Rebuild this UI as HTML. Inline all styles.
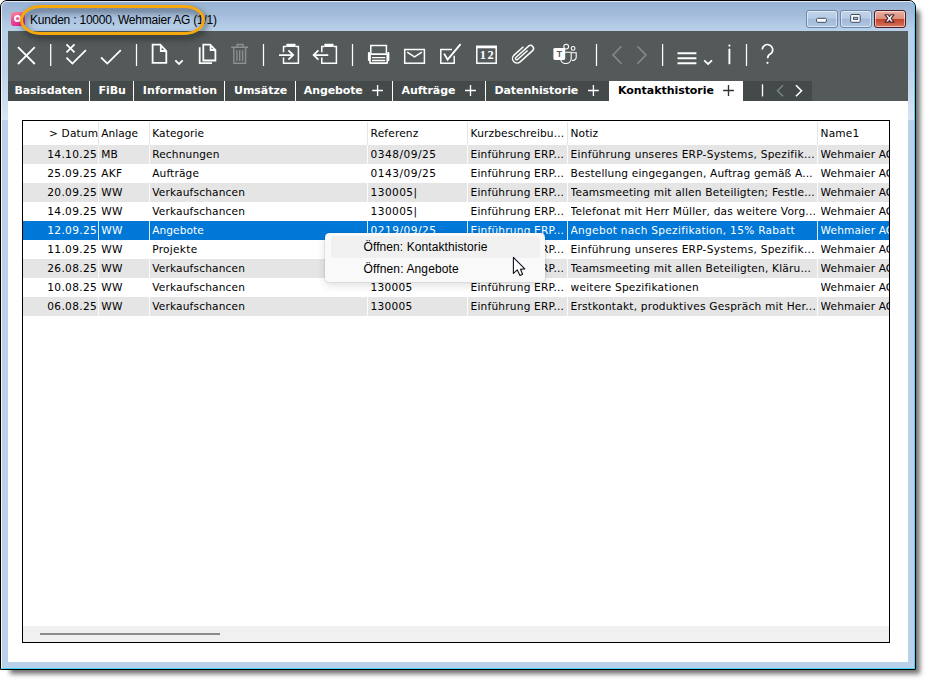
<!DOCTYPE html>
<html lang="de">
<head>
<meta charset="utf-8">
<title>Kunden : 10000, Wehmaier AG (1/1)</title>
<style>
html,body{margin:0;padding:0;background:#fff;}
body{width:931px;height:685px;position:relative;overflow:hidden;font-family:"DejaVu Sans","Liberation Sans",sans-serif;}
#win{position:absolute;left:0;top:0;width:914px;height:668px;border:1px solid #000;border-radius:7px 7px 0 0;
 background:linear-gradient(#97b2d4 0,#a2bbd9 12px,#b6cde7 26px,#b9d1ea 31px,#bcd3eb 70px,#d7e5f3 119px,#b9d1ea 119px,#b9d1ea 100%);box-shadow:7px 7px 5px -3px rgba(0,0,0,.56);}

#inner{position:absolute;left:0;top:0;width:912px;height:666px;border:1px solid rgba(255,255,255,.75);border-right-color:#45d5f8;border-bottom-color:#45d5f8;border-radius:6px 6px 0 0;}
#title{position:absolute;left:30px;top:13px;font-family:"Liberation Sans",sans-serif;font-size:12px;line-height:14px;color:#000;white-space:nowrap;}
#appicon{position:absolute;left:11px;top:12px;width:14px;height:14px;border-radius:3px;background:linear-gradient(160deg,#f98b9c 0,#ee4f93 45%,#e01f9b 100%);}
#appicon i{position:absolute;left:3.1px;top:3.2px;width:3.2px;height:3.2px;border:2.1px solid #fff;border-radius:50%;}
.cb{position:absolute;top:10px;height:16px;width:30px;border:1px solid #6d87a8;border-radius:3px;
 background:linear-gradient(#c3d4e9 0,#b7cbe4 45%,#a2bad9 50%,#b0c6e1 100%);box-shadow:inset 0 0 0 1px rgba(255,255,255,.55);}
#bmin{left:806px}#bmax{left:840px}
#bclose{left:874px;border-color:#521a24;background:linear-gradient(#e7b0a3 0,#dc8f7e 48%,#c4432a 52%,#d4775e 100%);}
#toolbar{position:absolute;left:8px;top:31px;width:900px;height:70px;background:#535a59;}
#tabbar{position:absolute;left:8px;top:81px;width:804px;height:20px;background:#434a49;}
.tab{position:absolute;top:81px;height:20px;line-height:20px;font-weight:bold;font-size:11px;color:#fff;white-space:nowrap;}
.tsep{position:absolute;top:81px;width:1px;height:20px;background:#fff;}
#acttab{position:absolute;left:609px;top:81px;width:134px;height:20px;background:#fff;}
#content{position:absolute;left:8px;top:101px;width:900px;height:561px;background:#fff;}
#grid{position:absolute;left:22px;top:120px;width:866px;height:521px;border:1px solid #000;background:#fff;overflow:hidden;}
.row{position:absolute;left:0;width:866px;height:19px;line-height:18px;font-size:10.6px;color:#000;white-space:nowrap;}
.row.g{background:#e5e5e5;}
.row.sel{background:#0078d7;color:#fff;}
.row.h{height:24px;line-height:24px;}
.c{position:absolute;top:0;height:100%;overflow:hidden;}
.c1{left:0;width:74.2px;text-align:right}
.row.h .c1{width:75.2px}
.c2{left:78.2px;width:48px}
.c3{left:129.2px;width:214px}
.c4{left:347.6px;width:96px}
.c5{left:447.6px;width:97px}
.c6{left:547.6px;width:247px}
.c7{left:797.6px;width:70px}
.vs{position:absolute;top:0;width:1px;height:195px;background:rgba(255,255,255,.85);}
.hs{position:absolute;top:1px;width:1px;height:23px;background:#e6e6e6;}
#strack{position:absolute;left:0;top:505px;width:866px;height:16px;background:#f0f0f0;}
#sthumb{position:absolute;left:17px;top:7px;width:180px;height:2px;background:#8b8b8b;}
#menu{position:absolute;left:325px;top:233px;width:220px;height:49px;background:#f9f9f9;border-radius:4.5px;
 box-shadow:0 0 0 1px rgba(0,0,0,.05),0 3px 8px rgba(0,0,0,.14);font-family:"Liberation Sans",sans-serif;font-size:12px;color:#000;}
#mhov{position:absolute;left:6px;top:3px;width:209px;height:22px;border-radius:3.5px;background:#f0f0f0;}
.mi{position:absolute;left:38.5px;height:22px;line-height:22px;white-space:nowrap;}
#ring{position:absolute;left:19.5px;top:5px;width:179px;height:24px;border:3px solid #f7a80c;border-radius:20px/15px;filter:drop-shadow(2px 3px 3px rgba(0,0,0,.68));}
svg{position:absolute;left:0;top:0;}
</style>
</head>
<body>
<div id="win">

 <div id="inner"></div>
</div>
<div id="appicon"><i></i></div>
<div id="title"><span style="letter-spacing:-0.215px">Kunden : 10000, Wehmaier AG (1/1)</span></div>
<div class="cb" id="bmin"></div><div class="cb" id="bmax"></div><div class="cb" id="bclose"></div>
<div id="toolbar"></div>
<div id="tabbar"></div>
<div id="content"></div>
<div id="acttab"></div>
<div class="tab" style="left:14.4px"><span style="letter-spacing:-0.08px">Basisdaten</span></div>
<div class="tab" style="left:98.6px"><span style="letter-spacing:-0.093px">FiBu</span></div>
<div class="tab" style="left:142.7px"><span style="letter-spacing:0.151px">Information</span></div>
<div class="tab" style="left:234.0px"><span style="letter-spacing:-0.025px">Umsätze</span></div>
<div class="tab" style="left:303.8px"><span style="letter-spacing:-0.115px">Angebote</span></div>
<div class="tab" style="left:401.5px"><span style="letter-spacing:-0.093px">Aufträge</span></div>
<div class="tab" style="left:494.4px"><span style="letter-spacing:-0.068px">Datenhistorie</span></div>
<div class="tab" style="left:618.0px;color:#000"><span style="letter-spacing:-0.049px">Kontakthistorie</span></div>
<div class="tsep" style="left:89px"></div><div class="tsep" style="left:133px"></div><div class="tsep" style="left:224px"></div><div class="tsep" style="left:295px"></div><div class="tsep" style="left:392px"></div><div class="tsep" style="left:485px"></div>

<div id="grid">
 <div class="row h" style="top:0"><div class="c c1"><span style="letter-spacing:0.155px">&gt; Datum</span></div><div class="c c2"><span style="letter-spacing:0.048px">Anlage</span></div><div class="c c3"><span style="letter-spacing:0.126px">Kategorie</span></div><div class="c c4"><span style="letter-spacing:0.16px">Referenz</span></div><div class="c c5"><span style="letter-spacing:0.124px">Kurzbeschreibu...</span></div><div class="c c6"><span style="letter-spacing:0.102px">Notiz</span></div><div class="c c7"><span style="letter-spacing:0.139px">Name1</span></div></div>
<div class="row g" style="top:24px"><div class="c c1"><span style="letter-spacing:0.35px">14.10.25</span></div><div class="c c2"><span style="letter-spacing:0.066px">MB</span></div><div class="c c3"><span style="letter-spacing:0.137px">Rechnungen</span></div><div class="c c4"><span style="letter-spacing:0.492px">0348/09/25</span></div><div class="c c5"><span style="letter-spacing:0.195px">Einführung ERP...</span></div><div class="c c6"><span style="letter-spacing:0.247px">Einführung unseres ERP-Systems, Spezifik...</span></div><div class="c c7"><span style="letter-spacing:0.113px">Wehmaier AG</span></div></div>
<div class="row " style="top:43px"><div class="c c1"><span style="letter-spacing:0.35px">25.09.25</span></div><div class="c c2"><span style="letter-spacing:0.279px">AKF</span></div><div class="c c3"><span style="letter-spacing:0.143px">Aufträge</span></div><div class="c c4"><span style="letter-spacing:0.492px">0143/09/25</span></div><div class="c c5"><span style="letter-spacing:0.195px">Einführung ERP...</span></div><div class="c c6"><span style="letter-spacing:0.165px">Bestellung eingegangen, Auftrag gemäß A...</span></div><div class="c c7"><span style="letter-spacing:0.113px">Wehmaier AG</span></div></div>
<div class="row g" style="top:62px"><div class="c c1"><span style="letter-spacing:0.35px">20.09.25</span></div><div class="c c2"><span style="letter-spacing:0.231px">WW</span></div><div class="c c3"><span style="letter-spacing:0.163px">Verkaufschancen</span></div><div class="c c4"><span style="letter-spacing:0.402px">130005|</span></div><div class="c c5"><span style="letter-spacing:0.195px">Einführung ERP...</span></div><div class="c c6"><span style="letter-spacing:0.179px">Teamsmeeting mit allen Beteiligten; Festle...</span></div><div class="c c7"><span style="letter-spacing:0.113px">Wehmaier AG</span></div></div>
<div class="row " style="top:81px"><div class="c c1"><span style="letter-spacing:0.35px">14.09.25</span></div><div class="c c2"><span style="letter-spacing:0.231px">WW</span></div><div class="c c3"><span style="letter-spacing:0.163px">Verkaufschancen</span></div><div class="c c4"><span style="letter-spacing:0.402px">130005|</span></div><div class="c c5"><span style="letter-spacing:0.195px">Einführung ERP...</span></div><div class="c c6"><span style="letter-spacing:0.185px">Telefonat mit Herr Müller, das weitere Vorg...</span></div><div class="c c7"><span style="letter-spacing:0.113px">Wehmaier AG</span></div></div>
<div class="row sel" style="top:100px"><div class="c c1"><span style="letter-spacing:0.35px">12.09.25</span></div><div class="c c2"><span style="letter-spacing:0.231px">WW</span></div><div class="c c3"><span style="letter-spacing:0.082px">Angebote</span></div><div class="c c4"><span style="letter-spacing:0.492px">0219/09/25</span></div><div class="c c5"><span style="letter-spacing:0.195px">Einführung ERP...</span></div><div class="c c6"><span style="letter-spacing:0.281px">Angebot nach Spezifikation, 15% Rabatt</span></div><div class="c c7"><span style="letter-spacing:0.113px">Wehmaier AG</span></div></div>
<div class="row " style="top:119px"><div class="c c1"><span style="letter-spacing:0.35px">11.09.25</span></div><div class="c c2"><span style="letter-spacing:0.231px">WW</span></div><div class="c c3"><span style="letter-spacing:0.272px">Projekte</span></div><div class="c c4"><span style="letter-spacing:0.255px">130005</span></div><div class="c c5"><span style="letter-spacing:0.195px">Einführung ERP...</span></div><div class="c c6"><span style="letter-spacing:0.247px">Einführung unseres ERP-Systems, Spezifik...</span></div><div class="c c7"><span style="letter-spacing:0.113px">Wehmaier AG</span></div></div>
<div class="row g" style="top:138px"><div class="c c1"><span style="letter-spacing:0.35px">26.08.25</span></div><div class="c c2"><span style="letter-spacing:0.231px">WW</span></div><div class="c c3"><span style="letter-spacing:0.163px">Verkaufschancen</span></div><div class="c c4"><span style="letter-spacing:0.255px">130005</span></div><div class="c c5"><span style="letter-spacing:0.195px">Einführung ERP...</span></div><div class="c c6"><span style="letter-spacing:0.188px">Teamsmeeting mit allen Beteiligten, Kläru...</span></div><div class="c c7"><span style="letter-spacing:0.113px">Wehmaier AG</span></div></div>
<div class="row " style="top:157px"><div class="c c1"><span style="letter-spacing:0.35px">10.08.25</span></div><div class="c c2"><span style="letter-spacing:0.231px">WW</span></div><div class="c c3"><span style="letter-spacing:0.163px">Verkaufschancen</span></div><div class="c c4"><span style="letter-spacing:0.255px">130005</span></div><div class="c c5"><span style="letter-spacing:0.195px">Einführung ERP...</span></div><div class="c c6"><span style="letter-spacing:0.195px">weitere Spezifikationen</span></div><div class="c c7"><span style="letter-spacing:0.113px">Wehmaier AG</span></div></div>
<div class="row g" style="top:176px"><div class="c c1"><span style="letter-spacing:0.35px">06.08.25</span></div><div class="c c2"><span style="letter-spacing:0.231px">WW</span></div><div class="c c3"><span style="letter-spacing:0.163px">Verkaufschancen</span></div><div class="c c4"><span style="letter-spacing:0.255px">130005</span></div><div class="c c5"><span style="letter-spacing:0.195px">Einführung ERP...</span></div><div class="c c6"><span style="letter-spacing:0.225px">Erstkontakt, produktives Gespräch mit Her...</span></div><div class="c c7"><span style="letter-spacing:0.113px">Wehmaier AG</span></div></div>

 <div class="hs" style="left:75px"></div><div class="hs" style="left:126px"></div><div class="hs" style="left:344px"></div><div class="hs" style="left:444px"></div><div class="hs" style="left:544px"></div><div class="hs" style="left:794px"></div>
 <div class="vs" style="left:75px;top:24px;height:171px"></div><div class="vs" style="left:126px;top:24px;height:171px"></div><div class="vs" style="left:344px;top:24px;height:171px"></div><div class="vs" style="left:444px;top:24px;height:171px"></div><div class="vs" style="left:544px;top:24px;height:171px"></div><div class="vs" style="left:794px;top:24px;height:171px"></div>
 <div id="strack"><div id="sthumb"></div></div>
</div>

<div id="menu"><div id="mhov"></div><div class="mi" style="top:3px"><span style="letter-spacing:0.089px">Öffnen: Kontakthistorie</span></div><div class="mi" style="top:25px"><span style="letter-spacing:0.137px">Öffnen: Angebote</span></div></div>
<div id="ring"></div>

<svg id="icons" width="931" height="685" viewBox="0 0 931 685" fill="none" stroke="#fff" stroke-width="1.8">
<!-- separators -->
<path stroke-width="1.25" d="M50.7 43.9V65.9M136.5 43.9V65.9M263.5 43.9V65.9M352.5 43.9V65.9M596.5 43.9V65.9M662.6 43.9V65.9M746.5 43.9V65.9"/>
<!-- close X -->
<path d="M18 47.2L34.8 64M34.8 47.2L18 64"/>
<!-- double check -->
<path d="M66.5 44.3L74.5 52.3M74.5 44.3L66.5 52.3M66.4 57.7L72.4 63.6L85.9 50.1"/>
<!-- check -->
<path d="M101.1 57.5L107.3 63.6L120.8 50.1"/>
<!-- new doc -->
<path d="M152.6 44.7H160.3L166.3 51.2V62.9H152.6Z M160.8 44.9V51H166.3"/>
<path d="M175.3 60.4L179 64L182.7 60.4"/>
<!-- copy -->
<path d="M203.3 44.7H210.2L215.4 50.2V60.5H203.3Z M210.6 44.9V50H215.4 M199.7 47.3V63.1H212"/>
<!-- trash -->
<g stroke="#8b9190" stroke-width="1.4"><path d="M231.2 47.3H248 M237.2 47.3V44.5H243V47.3 M233.8 47.3V63.2H245.6V47.3 M236.9 50.2V61 M239.7 50.2V61 M242.6 50.2V61"/></g>
<!-- import -->
<g stroke-width="1.5"><path d="M286.4 46.4H283.5V52.2 M283.5 57.4V63.2H298.4V46.4H295.5"/><rect x="286.3" y="43.8" width="9.3" height="3.2" rx=".8" fill="#fff" stroke="none"/>
<path stroke-width="1.75" d="M279 55H292.6 M288.4 50.3L293.2 55L288.4 59.7"/></g>
<!-- export -->
<g stroke-width="1.5"><path d="M324.4 46.4H321.8V52.2 M321.8 57.4V63.2H336.4V46.4H333.6"/><rect x="324.3" y="43.8" width="9.3" height="3.2" rx=".8" fill="#fff" stroke="none"/>
<path stroke-width="1.75" d="M328.3 55H314.2 M318.4 50.3L313.6 55L318.4 59.7"/></g>
<!-- printer -->
<g stroke-width="1.5"><path d="M370.8 53.6V45.4H386.4V53.6"/><path stroke-width="2.2" d="M369 53V60 M388.3 53V60" stroke-linecap="round"/><rect x="370" y="54.2" width="17.3" height="9" rx=".8" stroke-width="1.7"/><path stroke-width="1.3" d="M372 57.6H385.2 M372 60.5H385.2"/></g>
<!-- mail -->
<g stroke-width="1.5"><rect x="404.7" y="49.5" width="19.7" height="13.7"/><path d="M407.2 52.2L414.5 56.8L421.9 52.2"/></g>
<!-- checkbox -->
<g stroke-width="1.5"><path d="M452 49.5H440.8V63.2H454.2V55.8"/><path stroke-width="1.9" d="M444.1 53.6L447.6 59.7L460.6 44.2"/></g>
<!-- calendar -->
<g stroke-width="1.5"><rect x="476.8" y="46.5" width="19.4" height="16.7"/><path stroke-width="2.6" d="M476 47H497"/></g>
<text x="487.4" y="59.2" font-family="'Liberation Serif',serif" font-weight="bold" font-size="12.5" letter-spacing="1.3" text-anchor="middle" fill="#fff" stroke="none">12</text>
<!-- paperclip -->
<g transform="translate(522.5 53.6) rotate(-42)" stroke-width="1.45"><path d="M5.3 -4.55H-7.3A4.55 4.55 0 0 0 -7.3 4.55H9.5A3.02 3.02 0 0 0 9.5 -1.48H-7.6A1.25 1.25 0 0 0 -7.6 1.03H5.9"/></g>
<!-- teams -->
<g stroke-width="1.1"><circle cx="566.2" cy="46.6" r="2.4"/><circle cx="573.1" cy="48.4" r="1.9"/>
<path d="M565 52.2H571.2V58A5.4 5.4 0 0 1 560.6 59.6"/><path d="M571.6 52.7H576.2V57.2A3.2 3.2 0 0 1 572 60.2"/>
<rect x="553.4" y="47.9" width="11.8" height="12" rx="1.4" fill="#fff" stroke="none"/></g>
<text x="559.4" y="57.2" font-family="'Liberation Sans',sans-serif" font-weight="bold" font-size="8.6" text-anchor="middle" fill="#535a59" stroke="none">T</text>
<!-- nav -->
<g stroke="#858b8a" stroke-width="1.6"><path d="M621.5 46.3L613 55L621.5 63.7 M637.4 46.3L645.9 55L637.4 63.7"/></g>
<!-- hamburger -->
<path stroke-width="1.9" d="M677.5 53.2H696.4 M677.5 58.3H696.4 M677.5 63.3H696.4"/>
<path d="M704.2 60.4L708.1 64L712 60.4"/>
<!-- i -->
<path stroke-width="1.9" stroke-linecap="round" d="M729.4 49.4V63.4"/><circle cx="729.4" cy="45.6" r="1.1" fill="#fff" stroke="none"/>
<!-- ? -->
<path stroke-width="1.7" d="M762.3 49.6A5.2 5.2 0 1 1 771.3 53.3Q767.6 55.2 767.6 58.2"/><circle cx="767.5" cy="62.8" r="1.1" fill="#fff" stroke="none"/>
<!-- tab plus -->
<g stroke-width="1.35"><path d="M372.2 90.5H383 M377.6 85.1V95.9 M465.1 90.5H475.9 M470.5 85.1V95.9 M588 90.5H598.8 M593.4 85.1V95.9"/><path stroke="#333" d="M723.1 90.5H733.9 M728.5 85.1V95.9"/>
<path d="M762.5 84.3V96.4"/><path stroke="#7d8483" stroke-width="1.5" d="M783 85.2L777.5 90.7L783 96.2"/><path stroke-width="1.6" d="M796 85.2L801.5 90.7L796 96.2"/></g>
<!-- window buttons -->
<rect x="816.6" y="18.3" width="9.8" height="4" rx="1" fill="#fff" stroke="#3d4b61" stroke-width="1"/>
<rect x="850.7" y="14.5" width="9.5" height="7.8" rx="1" fill="#fff" stroke="#3d4b61" stroke-width="1"/><rect x="853.4" y="17.3" width="4.3" height="2.2" fill="#9fb9da" stroke="#3d4b61" stroke-width=".9"/>
<g stroke="#4b2730" stroke-width="1.1" fill="#fff" stroke-linejoin="round"><path d="M884.9 14.7H888.4L889.5 16.6L890.6 14.7H894.1L891.2 18.4L894.1 22.1H890.6L889.5 20.2L888.4 22.1H884.9L887.8 18.4Z"/></g>
<!-- cursor -->
<path d="M513.4 257.3V273.4L517.3 269.9L520 275.5L522.6 274.3L520.5 269.3L524.8 268.9Z" fill="#fff" stroke="#10131c" stroke-width="1.1" stroke-linejoin="round"/>
</svg>
</body>
</html>
